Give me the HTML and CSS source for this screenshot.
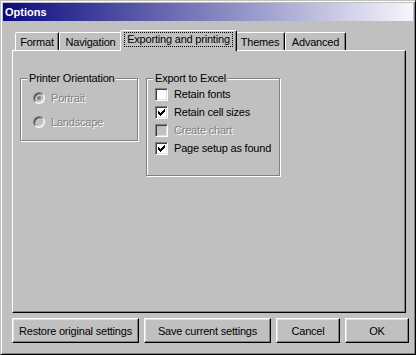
FILE: index.html
```html
<!DOCTYPE html>
<html lang="en">
<head>
    <meta charset="UTF-8">
    <title>Options</title>
    <link rel="stylesheet" href="styles.css">
</head>
<body>
    <div class="window">
        <div class="titlebar">Options</div>

        <div class="client">
            <div class="tabs">
                <div class="tab tab-format">Format</div>
                <div class="tab tab-nav">Navigation</div>
                <div class="tab active"><span class="focus">Exporting and printing</span></div>
                <div class="tab tab-themes">Themes</div>
                <div class="tab tab-advanced">Advanced</div>
            </div>

            <div class="panel">
                <fieldset class="group orient">
                    <legend>Printer Orientation</legend>
                    <div class="options">
                        <div class="row disabled"><span class="radio checked"></span>Portrait</div>
                        <div class="row disabled"><span class="radio"></span>Landscape</div>
                    </div>
                </fieldset>

                <fieldset class="group excel">
                    <legend>Export to Excel</legend>
                    <div class="options">
                        <div class="row"><span class="check"></span>Retain fonts</div>
                        <div class="row">
                            <span class="check">
                                <svg width="11" height="11" viewBox="0 0 11 11"><path d="M2 4h1v3H2z M3 5h1v3H3z M4 6h1v3H4z M5 5h1v3H5z M6 4h1v3H6z M7 3h1v3H7z M8 2h1v3H8z" fill="#000"/></svg>
                            </span>Retain cell sizes
                        </div>
                        <div class="row disabled"><span class="check"></span>Create chart</div>
                        <div class="row">
                            <span class="check">
                                <svg width="11" height="11" viewBox="0 0 11 11"><path d="M2 4h1v3H2z M3 5h1v3H3z M4 6h1v3H4z M5 5h1v3H5z M6 4h1v3H6z M7 3h1v3H7z M8 2h1v3H8z" fill="#000"/></svg>
                            </span>Page setup as found
                        </div>
                    </div>
                </fieldset>
            </div>

            <div class="buttons">
                <button class="btn wide">Restore original settings</button>
                <button class="btn wide">Save current settings</button>
                <button class="btn narrow">Cancel</button>
                <button class="btn narrow">OK</button>
            </div>
        </div>
    </div>
</body>
</html>
```

FILE: styles.css
```css
html, body {
    margin: 0;
    padding: 0;
}

body {
    font-family: "Liberation Sans", Arial, sans-serif;
    font-size: 11px;
    letter-spacing: -0.2px;
    color: #000;
    background: #c0c0c0;
}

/* window frame: 2px raised border + 1px face */
.window {
    width: 416px;
    height: 355px;
    box-sizing: border-box;
    border: 1px solid;
    border-color: #c0c0c0 #000 #000 #c0c0c0;
    box-shadow: inset 1px 1px #fff, inset -1px -1px #808080;
    padding: 2px;
    background: #c0c0c0;
}

.titlebar {
    height: 18px;
    line-height: 18px;
    padding-left: 2px;
    color: #fff;
    font-weight: bold;
    letter-spacing: 0;
    background: linear-gradient(to right, #0a0a80, #f6f6fc);
}

.client {
    padding: 9px 4px 0 9px;
}

/* tab strip */
.tabs {
    display: flex;
    align-items: flex-end;
    height: 20px;
    padding-left: 3px;
}

.tab {
    height: 18px;
    box-sizing: border-box;
    padding: 2px 0 0;
    line-height: 14px;
    text-align: center;
    white-space: nowrap;
    border: 1px solid;
    border-bottom: none;
    border-color: #fff #000 transparent #fff;
    border-radius: 2px 2px 0 0;
    box-shadow: inset -1px 0 #808080;
    background: #c0c0c0;
}

.tab-format { width: 44px; }
.tab-nav { width: 63px; }
.tab-themes { width: 50px; }
.tab-advanced { width: 61px; }

.tab.active {
    position: relative;
    z-index: 1;
    width: 117px;
    height: 21px;
    margin: 0 -2px -1px;
    padding: 1px 3px 0;
}

.focus {
    display: block;
    border: 1px dotted #000;
    line-height: 13px;
}

/* tab page */
.panel {
    height: 263px;
    box-sizing: border-box;
    margin-right: 3px;
    border: 1px solid;
    border-color: #fff #000 #000 #fff;
    box-shadow: inset -1px -1px #808080;
    padding: 21px 7px 0;
    display: flex;
    align-items: flex-start;
    gap: 8px;
}

/* etched group box */
.group {
    margin: 0;
    padding: 0;
    min-width: 0;
    box-sizing: border-box;
    border: 1px solid #808080;
    box-shadow: inset 1px 1px #fff, 1px 1px #fff;
}

.group legend {
    margin-left: 6px;
    padding: 0 2px;
    line-height: 13px;
    background: #c0c0c0;
}

.orient {
    width: 118px;
    height: 69px;
}

.excel {
    width: 134px;
    height: 104px;
}

.orient .options {
    padding: 1px 0 0 12px;
}

.orient .row {
    height: 24px;
}

.excel .options {
    padding: 0 0 0 8px;
}

.excel .row {
    height: 18px;
}

.row {
    display: flex;
    align-items: center;
    gap: 6px;
    white-space: nowrap;
}

.row.disabled {
    color: #808080;
    text-shadow: 1px 1px #fff;
}

.radio {
    width: 12px;
    height: 12px;
    box-sizing: border-box;
    border-radius: 50%;
    border: 1px solid;
    border-color: #808080 #fff #fff #808080;
    box-shadow: inset 1px 1px #404040, inset -1px -1px #dfdfdf;
    background: #c0c0c0;
    display: flex;
    align-items: center;
    justify-content: center;
}

.radio.checked::after {
    content: "";
    width: 4px;
    height: 4px;
    border-radius: 50%;
    background: #808080;
}

.check {
    width: 13px;
    height: 13px;
    box-sizing: border-box;
    border: 1px solid;
    border-color: #808080 #fff #fff #808080;
    box-shadow: inset 1px 1px #404040, inset -1px -1px #dfdfdf;
    background: #fff;
    flex-shrink: 0;
}

.check svg {
    display: block;
}

.row.disabled .check {
    background: #c0c0c0;
}

/* bottom buttons */
.buttons {
    display: flex;
    gap: 5px;
    margin-top: 5px;
}

.btn {
    height: 25px;
    box-sizing: border-box;
    padding: 0;
    border: 1px solid;
    border-color: #fff #000 #000 #fff;
    box-shadow: inset -1px -1px #808080, inset 1px 1px #dfdfdf;
    background: #c0c0c0;
    font: inherit;
    letter-spacing: inherit;
    color: #000;
}

.btn.wide {
    width: 127px;
}

.btn.narrow {
    width: 64px;
}
```
